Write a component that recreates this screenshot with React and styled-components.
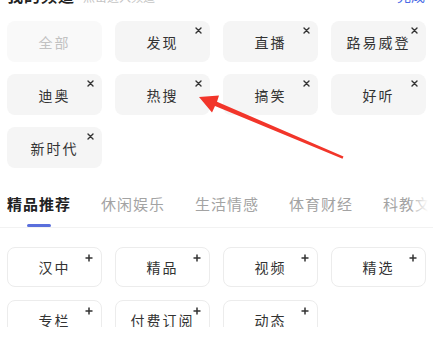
import styled, { createGlobalStyle } from 'styled-components'

const GlobalStyle = createGlobalStyle`
  body {
    margin: 0;
    background: #fff;
    font-family: 'Noto Sans CJK SC', 'Noto Sans', sans-serif;
  }
`

const myChannels = [
  { name: '全部', fixed: true },
  { name: '发现' },
  { name: '直播' },
  { name: '路易威登' },
  { name: '迪奥' },
  { name: '热搜' },
  { name: '搞笑' },
  { name: '好听' },
  { name: '新时代' },
]

const tabs = ['精品推荐', '休闲娱乐', '生活情感', '体育财经', '科教文化']

const recommend = ['汉中', '精品', '视频', '精选', '专栏', '付费订阅', '动态']

const CloseIcon = () => (
  <svg width="7" height="7" viewBox="0 0 7 7">
    <path d="M1 1L6 6M6 1L1 6" stroke="#333" strokeWidth="1.4" strokeLinecap="round" />
  </svg>
)

const PlusIcon = () => (
  <svg width="8" height="8" viewBox="0 0 8 8">
    <path d="M4 0.5V7.5M0.5 4H7.5" stroke="#333" strokeWidth="1.5" />
  </svg>
)

const App = () => {
  return (
    <>
      <GlobalStyle />
      <Page>
        <Header>
          <HeaderLeft>
            <Title>我的频道</Title>
            <Hint>点击进入频道</Hint>
          </HeaderLeft>
          <Done>完成</Done>
        </Header>

        <Grid>
          {myChannels.map((c) => (
            <Card key={c.name} fixed={c.fixed}>
              {c.name}
              {!c.fixed && (
                <Corner>
                  <CloseIcon />
                </Corner>
              )}
            </Card>
          ))}
        </Grid>

        <Tabs>
          {tabs.map((t, i) => (
            <Tab key={t} active={i === 0}>
              {t}
            </Tab>
          ))}
        </Tabs>

        <Grid2>
          {recommend.map((r) => (
            <OutlineCard key={r}>
              {r}
              <Corner>
                <PlusIcon />
              </Corner>
            </OutlineCard>
          ))}
        </Grid2>

        <Arrow width="440" height="346" viewBox="0 0 440 346">
          <polygon
            points="199,97 219,95.5 217,101.8 343.5,156.5 342.5,158.8 215,106 212,112.5"
            fill="#f2352a"
          />
        </Arrow>
      </Page>
    </>
  )
}

const Page = styled.div`
  position: relative;
  width: 440px;
  height: 327px;
  overflow: hidden;
  background: #fff;
`

const Header = styled.div`
  display: flex;
  align-items: center;
  justify-content: space-between;
  height: 22px;
  margin-top: -16px;
  padding: 0 15px 0 7px;
`

const HeaderLeft = styled.div`
  display: flex;
  align-items: baseline;
  gap: 8px;
`

const Title = styled.span`
  font-size: 16px;
  font-weight: 700;
  color: #222;
  letter-spacing: 1px;
`

const Hint = styled.span`
  font-size: 12px;
  color: #c4c4c4;
`

const Done = styled.span`
  font-size: 14px;
  color: #4a6ae6;
`

const Grid = styled.div`
  display: grid;
  grid-template-columns: repeat(4, 95px);
  column-gap: 13px;
  row-gap: 12px;
  padding: 15px 0 0 7px;
`

const Card = styled.div`
  position: relative;
  height: 41px;
  display: flex;
  align-items: center;
  justify-content: center;
  border-radius: 8px;
  background: ${({ fixed }) => (fixed ? '#f9f9f9' : '#f5f5f5')};
  color: ${({ fixed }) => (fixed ? '#c2c2c2' : '#333')};
  font-size: 14px;
  letter-spacing: 2px;
`

const Corner = styled.span`
  position: absolute;
  top: 6px;
  right: 8px;
  display: flex;
`

const Tabs = styled.div`
  position: relative;
  display: flex;
  gap: 30px;
  padding: 25px 0 0 7px;
  margin-right: 7px;
  border-bottom: 1px solid #f2f2f2;
  white-space: nowrap;
  overflow: hidden;

  &::after {
    content: '';
    position: absolute;
    right: 0;
    top: 0;
    bottom: 1px;
    width: 24px;
    background: linear-gradient(to right, rgba(255, 255, 255, 0), #fff 80%);
  }
`

const Tab = styled.div`
  position: relative;
  font-size: 15px;
  letter-spacing: 1px;
  line-height: 22px;
  padding-bottom: 12px;
  font-weight: ${({ active }) => (active ? 700 : 400)};
  color: ${({ active }) => (active ? '#222' : '#a3a3a3')};

  &::after {
    content: '';
    display: ${({ active }) => (active ? 'block' : 'none')};
    position: absolute;
    left: 50%;
    bottom: 0;
    width: 24px;
    height: 3px;
    margin-left: -12px;
    border-radius: 2px;
    background: #5a6fdc;
  }
`

const Grid2 = styled.div`
  display: grid;
  grid-template-columns: repeat(4, 95px);
  column-gap: 13px;
  row-gap: 13px;
  padding: 19px 0 0 7px;
`

const OutlineCard = styled.div`
  position: relative;
  height: 40px;
  display: flex;
  align-items: center;
  justify-content: center;
  border-radius: 8px;
  border: 1px solid #ececec;
  box-sizing: border-box;
  background: #fff;
  color: #333;
  font-size: 14px;
  letter-spacing: 2px;
`

const Arrow = styled.svg`
  position: absolute;
  left: 0;
  top: 0;
  pointer-events: none;
`

export default App
